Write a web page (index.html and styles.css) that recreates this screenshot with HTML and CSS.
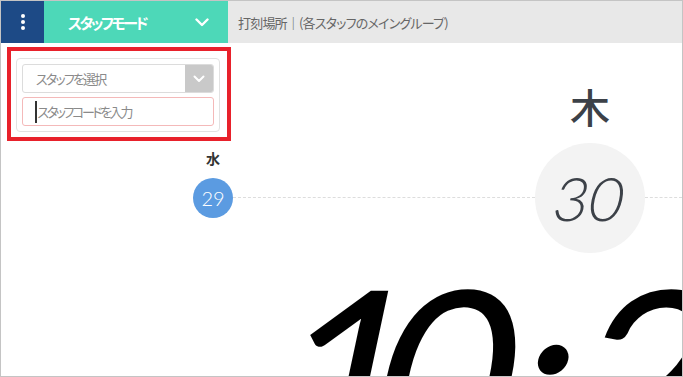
FILE: index.html
```html
<!DOCTYPE html>
<html lang="ja">
<head>
    <meta charset="utf-8">
    <title>打刻 - スタッフモード</title>
    <link rel="stylesheet" href="styles.css">
</head>
<body>
    <div class="header">
        <div class="menu-btn">
            <span class="dot"></span>
            <span class="dot"></span>
            <span class="dot"></span>
        </div>
        <div class="mode">
            <span class="mode-label">スタッフモード</span>
            <svg class="mode-arrow" width="14" height="9" viewBox="0 0 14 9">
                <path d="M1.5 1.5 L7 7 L12.5 1.5" fill="none" stroke="#fff" stroke-width="2.4" stroke-linecap="round" stroke-linejoin="round"/>
            </svg>
        </div>
        <div class="place">打刻場所｜(各スタッフのメイングループ)</div>
    </div>

    <div class="main">
        <!-- スタッフ選択パネル -->
        <div class="staff-panel">
            <div class="staff-card">
                <div class="staff-select">
                    <span class="select-text">スタッフを選択</span>
                    <span class="select-btn">
                        <svg width="12" height="8" viewBox="0 0 12 8">
                            <path d="M1.5 1.5 L6 6 L10.5 1.5" fill="none" stroke="#fff" stroke-width="2" stroke-linecap="round" stroke-linejoin="round"/>
                        </svg>
                    </span>
                </div>
                <div class="code-input">
                    <span class="caret"></span>
                    <span class="placeholder">スタッフコードを入力</span>
                </div>
            </div>
        </div>

        <div class="calendar">
            <div class="day day-small">
                <div class="weekday">水</div>
                <div class="date-circle">29</div>
            </div>
            <div class="track"></div>
            <div class="day day-today">
                <div class="weekday">木</div>
                <div class="date-circle"><span class="slant">30</span></div>
            </div>
            <div class="track track-end"></div>
        </div>

        <div class="clock">
            <span class="clock-time"><span class="ch ch-1">1</span><span class="ch ch-0">0</span><span class="ch ch-colon">:</span><span class="ch ch-2">2</span><span class="ch">7</span></span>
        </div>
    </div>
</body>
</html>
```

FILE: styles.css
```css
html, body {
    margin: 0;
    padding: 0;
}
body {
    font-family: "Noto Sans CJK JP", sans-serif;
    font-feature-settings: "palt" 1;
    background-color: #ffffff;
    border: 1px solid #c4c4c4;
    box-sizing: border-box;
    width: 683px;
    height: 377px;
    overflow: hidden;
    position: relative;
}
.header {
    display: flex;
    height: 42px;
}
.menu-btn {
    width: 43px;
    background-color: #1d4a86;
    display: flex;
    flex-direction: column;
    align-items: center;
    justify-content: center;
    gap: 2px;
}
.menu-btn .dot {
    width: 4px;
    height: 4px;
    border-radius: 50%;
    background-color: #ffffff;
}
.mode {
    width: 184px;
    box-sizing: border-box;
    background-color: #4dd8b8;
    display: flex;
    align-items: center;
    justify-content: space-between;
    padding: 0 19px 0 24px;
}
.mode-label {
    color: #ffffff;
    font-weight: bold;
    font-size: 15px;
    letter-spacing: -2.5px;
}
.place {
    flex: 1;
    background-color: #e8e8e8;
    color: #666666;
    font-size: 13px;
    letter-spacing: -0.8px;
    display: flex;
    align-items: center;
    padding-left: 10px;
}
.main {
    position: relative;
}
/* パネルはカレンダーの上に重ねる */
.staff-panel {
    position: absolute;
    left: 6px;
    top: 4px;
    width: 224px;
    height: 94px;
    box-sizing: border-box;
    border: 4px solid #e8212b;
    padding: 7px 7px 0 5px;
    z-index: 10;
}
.staff-card {
    border: 1px solid #e2e2e2;
    border-radius: 4px;
    padding: 5px;
    background-color: #ffffff;
    display: flex;
    flex-direction: column;
    gap: 4px;
}
.staff-select {
    display: flex;
    height: 29px;
    box-sizing: border-box;
    border: 1px solid #dcdcdc;
    border-radius: 3px;
    overflow: hidden;
}
.select-text {
    flex: 1;
    display: flex;
    align-items: center;
    padding-left: 13px;
    font-size: 13px;
    letter-spacing: -1.8px;
    color: #8a8a8a;
}
.select-btn {
    width: 28px;
    background-color: #c9c9c9;
    display: flex;
    align-items: center;
    justify-content: center;
}
.code-input {
    display: flex;
    align-items: center;
    height: 29px;
    box-sizing: border-box;
    border: 1px solid #f4b9b9;
    border-radius: 3px;
    padding-left: 12px;
}
.caret {
    width: 1.5px;
    height: 22px;
    background-color: #333333;
    margin-right: 1px;
}
.placeholder {
    font-size: 13px;
    letter-spacing: -2.4px;
    color: #8a8a8a;
}
.calendar {
    display: flex;
    align-items: flex-start;
    padding: 43px 0 0 192px;
}
.day {
    display: flex;
    flex-direction: column;
    align-items: center;
}
.day-small {
    width: 40px;
    margin-top: 65px;
}
.day-small .weekday {
    font-size: 14px;
    line-height: 14px;
    font-weight: bold;
    color: #333333;
    margin-bottom: 13px;
}
.day-small .date-circle {
    width: 40px;
    height: 40px;
    border-radius: 50%;
    background-color: #5b9be1;
    color: #ffffff;
    font-family: "Lato", sans-serif;
    font-weight: 300;
    font-size: 20px;
    display: flex;
    align-items: center;
    justify-content: center;
}
.day-today {
    width: 110px;
}
.day-today .weekday {
    font-size: 40px;
    line-height: 40px;
    font-weight: 500;
    color: #3c4148;
    margin-bottom: 17px;
}
.day-today .date-circle {
    width: 110px;
    height: 110px;
    border-radius: 50%;
    background-color: #f3f3f3;
    color: #3c4148;
    font-family: "Lato", sans-serif;
    font-weight: 300;
    font-size: 60px;
    display: flex;
    align-items: center;
    justify-content: center;
}
.slant {
    display: inline-block;
    transform: skewX(-12deg);
}
.track {
    flex: 1;
    margin-top: 111px;
    border-top: 1px dashed #dddddd;
}
.track-end {
    flex: none;
    width: 37px;
}
.clock {
    font-family: "Lato", sans-serif;
    font-weight: 400;
    font-size: 240px;
    line-height: 200px;
    color: #000000;
    white-space: nowrap;
    padding-left: 282px;
    margin-top: 17px;
}
.clock-time {
    display: inline-block;
    transform: skewX(-12deg);
    transform-origin: left center;
}
.ch {
    display: inline-block;
    width: 122px;
    text-align: center;
}
.ch-1 { width: 98px; }
.ch-0 { width: 138px; }
.ch-colon { width: 64px; }
.ch-2 { width: 122px; }
```
